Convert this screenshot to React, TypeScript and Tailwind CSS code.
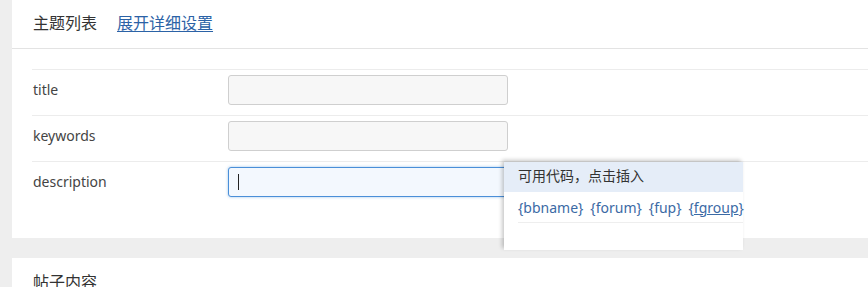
import React from "react";

const font = { fontFamily: '"Noto Sans", "Noto Sans CJK SC", sans-serif' };

function Row({ label, focused }: { label: string; focused?: boolean }) {
  return (
    <div className="flex items-center border-t border-[#ececec] pt-[5px] pb-[10px]">
      <div className="w-[196px] pl-px text-[14px] text-[#444] leading-none">{label}</div>
      {focused ? (
        <div className="relative h-[30px] w-[280px] rounded-[3px] border border-[#4a8fd8] bg-[#f3f8fe] shadow-[0_0_3px_rgba(74,143,216,0.55)]">
          <span className="absolute left-[9px] top-[6px] h-[16px] w-px bg-[#222]" />
        </div>
      ) : (
        <div className="h-[30px] w-[280px] rounded-[3px] border border-[#cfcfcf] bg-[#f7f7f7]" />
      )}
    </div>
  );
}

export default function App() {
  return (
    <div className="h-[287px] w-[868px] overflow-hidden bg-[#eeeeee] pl-3" style={font}>
      <div className="relative h-[238px] bg-white">
        <div className="flex h-[49px] items-center gap-5 border-b border-[#e3e3e3] pl-[21px] pb-[3px]">
          <span className="text-[16px] text-[#333]">主题列表</span>
          <a className="text-[16px] text-[#2b62a6] underline underline-offset-2">展开详细设置</a>
        </div>
        <div className="ml-5 mt-5">
          <Row label="title" />
          <Row label="keywords" />
          <Row label="description" focused />
        </div>
        <div className="absolute left-[492px] top-[162px] z-10 h-[88px] w-[239px] bg-white shadow-[-2px_-2px_4px_rgba(0,0,0,0.22)]">
          <div className="flex h-[30px] items-center bg-[#e5edf8] pb-[3px] pl-[14px] text-[14px] text-[#333]">
            可用代码，点击插入
          </div>
          <div className="ml-[14px] flex h-[31px] items-center gap-[7px] whitespace-nowrap border-b border-[#eeeeee] text-[14px] text-[#3b6aa5]">
            <span>{"{bbname}"}</span>
            <span>{"{forum}"}</span>
            <span>{"{fup}"}</span>
            <span>
              {"{"}
              <span className="underline">fgroup</span>
              {"}"}
            </span>
          </div>
        </div>
      </div>
      <div className="mt-5 h-[60px] bg-white pl-[21px] pt-[12px]">
        <span className="text-[16px] leading-6 text-[#333]">帖子内容</span>
      </div>
    </div>
  );
}
